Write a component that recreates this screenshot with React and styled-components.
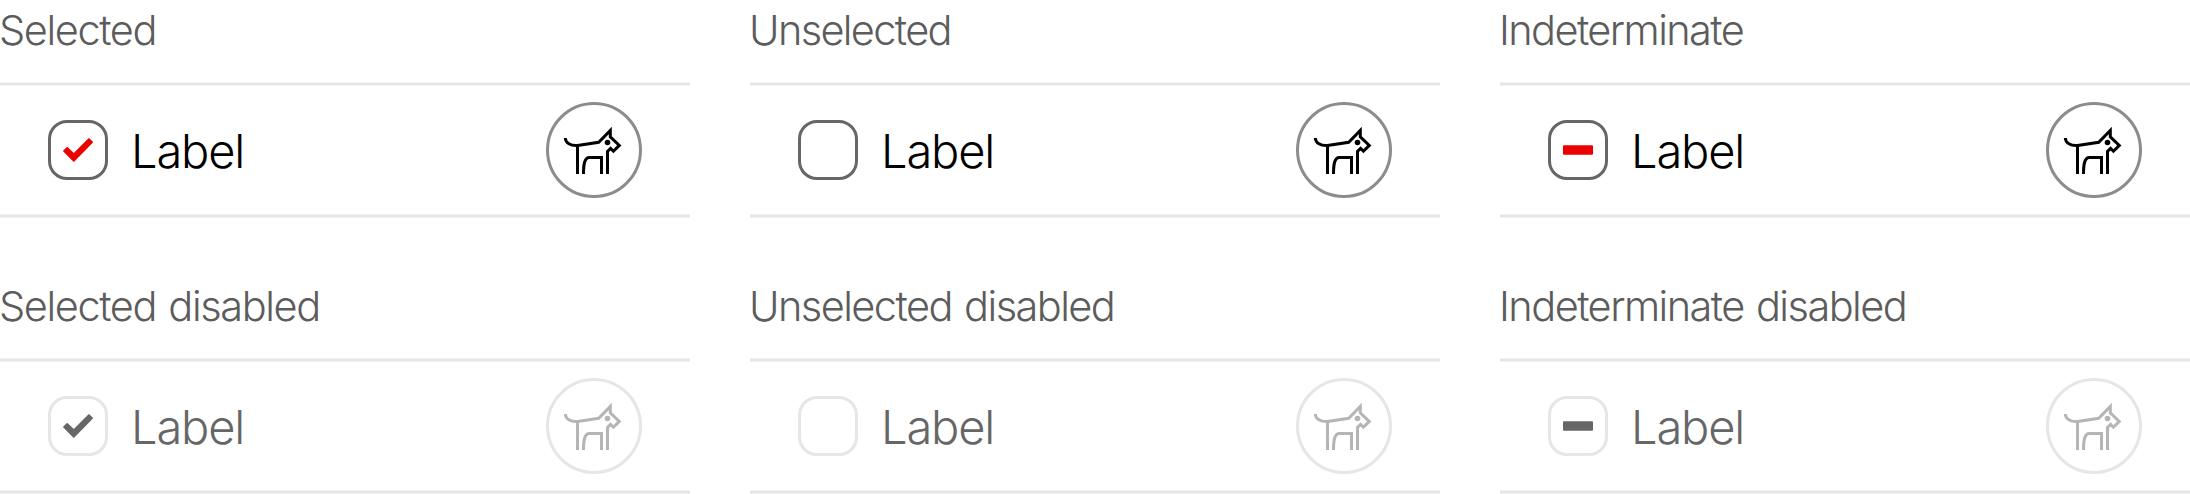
import React from "react";
import styled, { createGlobalStyle } from "styled-components";

const GlobalStyle = createGlobalStyle`
  body { margin: 0; background: #fff; overflow: hidden; }
  * { box-sizing: border-box; }
`;

const Board = styled.main`
  width: 2190px;
  height: 494px;
  overflow: hidden;
  display: grid;
  grid-template-columns: repeat(3, 690px);
  grid-template-rows: 276px 218px;
  column-gap: 60px;
  font-family: Inter, "Liberation Sans", sans-serif;
  font-weight: 300;
`;

const Example = styled.section`
  display: flex;
  flex-direction: column;
`;

const Title = styled.h2`
  margin: 0;
  height: 82px;
  padding-top: 5px;
  text-indent: -1px;
  font-size: 41.5px;
  line-height: 50px;
  font-weight: 300;
  letter-spacing: ${(p) => p.$tracking}px;
  word-spacing: 2px;
  color: #5c5c5c;
  white-space: nowrap;
`;

const Row = styled.div`
  height: 136px;
  flex: none;
  display: flex;
  align-items: center;
  padding: 0 48px;
`;

const Divider = styled.div`
  height: 4px;
  margin-bottom: ${(p) => (p.$last ? 0 : -4)}px;
  margin-top: ${(p) => (p.$last ? -4 : 0)}px;
  flex: none;
  background: #e6e6e6;
  border-top: 1px solid #f2f2f2;
  border-bottom: 1px solid #f2f2f2;
`;

const Box = styled.span`
  width: 60px;
  height: 60px;
  border: 3px solid ${(p) => (p.$disabled ? "#e6e6e6" : "#666")};
  border-radius: 19px;
  display: flex;
`;

const Mark = styled.svg`
  width: 54px;
  height: 54px;
  fill: ${(p) => (p.$disabled ? "#666" : "#eb0000")};
`;

const Label = styled.span`
  flex: 1;
  margin-left: 23px;
  padding-top: 2px;
  font-size: 47px;
  line-height: 60px;
  letter-spacing: -1.15px;
  color: ${(p) => (p.$disabled ? "#666" : "#000")};
`;

const Avatar = styled.span`
  width: 96px;
  height: 96px;
  border: 3px solid ${(p) => (p.$disabled ? "#e6e6e6" : "#8c8c8c")};
  border-radius: 50%;
  color: ${(p) => (p.$disabled ? "#b5b5b5" : "#000")};
  display: flex;
`;

const DogIcon = () => (
  <svg width="90" height="90" viewBox="3 3 90 90" fill="none" stroke="currentColor" strokeWidth="3">
    <path d="M19.3 36C19.6 41 24.5 44 31.5 43.5L52.7 40.3L64.3 28.5V34.8L73.3 43.4L67.4 49.2L64.6 46.4L61.5 49.4V72" />
    <path d="M31.5 43.5V72" />
    <path d="M37.5 72C37.5 62 38.6 55.5 43.3 55.5H55.5V72" />
    <circle cx="61.5" cy="40.5" r="2.8" fill="currentColor" stroke="none" />
  </svg>
);

const CheckMark = ({ state, disabled }) => (
  <Mark $disabled={disabled} viewBox="3 3 54 54">
    {state === "selected" && (
      <path d="M15.3 30.5L18.6 27.2Q19.2 26.7 19.8 27.2L25.8 33L40.3 18.4Q40.9 17.8 41.5 18.4L44.7 21.6Q45.2 22.2 44.7 22.8L26.4 41.4Q25.8 42 25.2 41.4L15.3 31.6Q14.8 31.1 15.3 30.5Z" />
    )}
    {state === "indeterminate" && <rect x="15" y="25.2" width="30" height="9.6" rx="1" />}
  </Mark>
);

const examples = [
  { title: "Selected", state: "selected", tracking: -1.4 },
  { title: "Unselected", state: "unselected", tracking: -1.65 },
  { title: "Indeterminate", state: "indeterminate", tracking: -1.6 },
  { title: "Selected disabled", state: "selected", disabled: true, tracking: -1.4 },
  { title: "Unselected disabled", state: "unselected", disabled: true, tracking: -1.55 },
  { title: "Indeterminate disabled", state: "indeterminate", disabled: true, tracking: -1.55 },
];

export default function App() {
  return (
    <>
      <GlobalStyle />
      <Board>
        {examples.map(({ title, state, disabled, tracking }) => (
          <Example key={title}>
            <Title $tracking={tracking}>{title}</Title>
            <Divider />
            <Row>
              <Box $disabled={disabled}>
                <CheckMark state={state} disabled={disabled} />
              </Box>
              <Label $disabled={disabled}>Label</Label>
              <Avatar $disabled={disabled}>
                <DogIcon />
              </Avatar>
            </Row>
            <Divider $last />
          </Example>
        ))}
      </Board>
    </>
  );
}
